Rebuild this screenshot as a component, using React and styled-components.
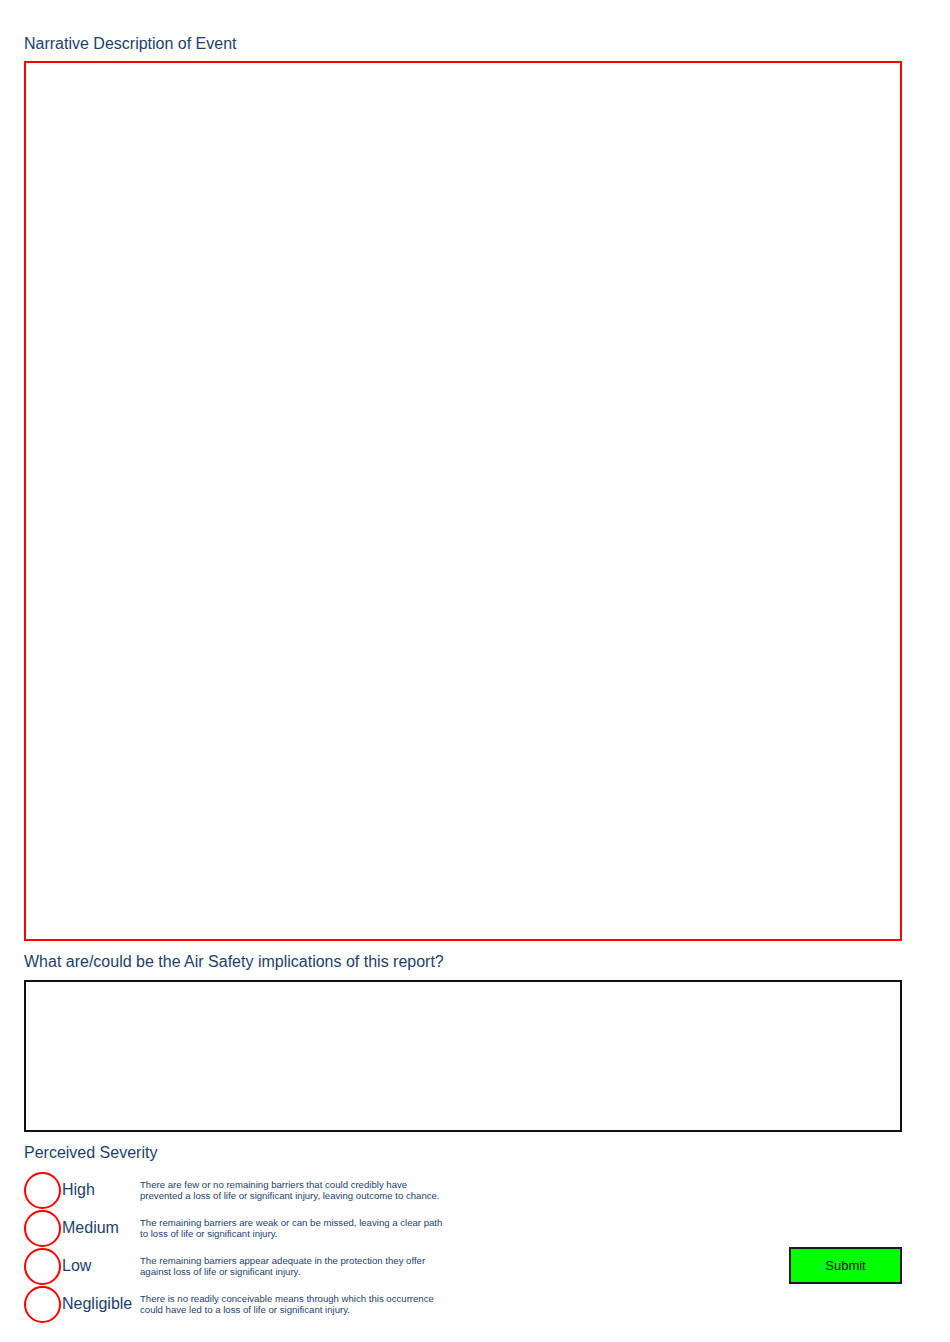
import React from "react";
import styled, { createGlobalStyle } from "styled-components";

const Global = createGlobalStyle`
  html, body { margin: 0; padding: 0; background: #ffffff; }
  body { font-family: "Liberation Sans", Arial, Helvetica, sans-serif; }
  * { box-sizing: border-box; }
`;

const Page = styled.main`
  width: 950px;
  padding: 35px 48px 20px 24px;
  display: flex;
  flex-direction: column;
`;

const Label = styled.label`
  display: block;
  font-size: 16px;
  line-height: 18px;
  color: #1d3f6e;
  margin-bottom: ${(p) => p.$after}px;
`;

const Field = styled.textarea`
  display: block;
  width: 878px;
  height: ${(p) => p.$height}px;
  border: 2px solid ${(p) => p.$border};
  margin: 0 0 ${(p) => p.$after}px 0;
  padding: 4px;
  resize: none;
  outline: none;
  background: #fff;
  font-family: "Liberation Sans", Arial, sans-serif;
  font-size: 13px;
  overflow: hidden;
`;

const SeveritySection = styled.section`
  display: flex;
  justify-content: space-between;
  align-items: flex-start;
`;

const Options = styled.div`
  display: flex;
  flex-direction: column;
`;

const OptionRow = styled.div`
  display: flex;
  align-items: center;
  height: 38px;
`;

const Radio = styled.span`
  width: 37px;
  height: 37px;
  flex: 0 0 37px;
  border: 2px solid #ff0000;
  border-radius: 50%;
  background: #fff;
`;

const OptionName = styled.span`
  width: 78px;
  margin-left: 1px;
  font-size: 16px;
  line-height: 18px;
  color: #1d3f6e;
  white-space: nowrap;
`;

const OptionText = styled.p`
  margin: 0;
  font-size: 9.6px;
  line-height: 11px;
  color: #1d3f6e;
  width: 340px;
  white-space: nowrap;
`;

const SubmitButton = styled.button`
  margin-top: 76px;
  width: 113px;
  height: 37px;
  background: #00ff00;
  border: 2px solid #1a1a1a;
  border-radius: 0;
  font-family: "Liberation Sans", Arial, sans-serif;
  font-size: 13px;
  color: #111;
  padding: 0;
  cursor: pointer;
`;

const options = [
  {
    name: "High",
    text: [
      "There are few or no remaining barriers that could credibly have",
      "prevented a loss of life or significant injury, leaving outcome to chance.",
    ],
  },
  {
    name: "Medium",
    text: [
      "The remaining barriers are weak or can be missed, leaving a clear path",
      "to loss of life or significant injury.",
    ],
  },
  {
    name: "Low",
    text: [
      "The remaining barriers appear adequate in the protection they offer",
      "against loss of life or significant injury.",
    ],
  },
  {
    name: "Negligible",
    text: [
      "There is no readily conceivable means through which this occurrence",
      "could have led to a loss of life or significant injury.",
    ],
  },
];

export default function App() {
  return (
    <>
      <Global />
      <Page>
        <Label $after={8}>Narrative Description of Event</Label>
        <Field $height={880} $border="#ff0000" $after={12} />
        <Label $after={9}>What are/could be the Air Safety implications of this report?</Label>
        <Field $height={152} $border="#111111" $after={12} />
        <Label $after={9}>Perceived Severity</Label>
        <SeveritySection>
          <Options>
            {options.map((o) => (
              <OptionRow key={o.name}>
                <Radio />
                <OptionName>{o.name}</OptionName>
                <OptionText>
                  {o.text[0]}
                  <br />
                  {o.text[1]}
                </OptionText>
              </OptionRow>
            ))}
          </Options>
          <SubmitButton type="button">Submit</SubmitButton>
        </SeveritySection>
      </Page>
    </>
  );
}
